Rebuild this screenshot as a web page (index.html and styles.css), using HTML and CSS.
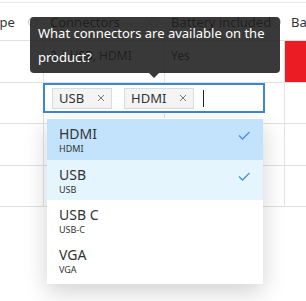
FILE: index.html
```html
<!DOCTYPE html>
<html>
  <head>
    <link rel="stylesheet" href="styles.css">
  </head>

  <body>
    <div class="grid">
      <div class="row head">
        <div class="cell"><span>Type</span><span class="col-menu"></span></div>
        <div class="cell"><span>Connectors</span><span class="col-menu"></span></div>
        <div class="cell"><span>Battery included</span><span class="col-menu"></span></div>
        <div class="cell"><span>Battery type</span></div>
      </div>
      <div class="row">
        <div class="cell"></div>
        <div class="cell">2 <span class="sep">|</span> USB, HDMI</div>
        <div class="cell">Yes</div>
        <div class="cell red"></div>
      </div>
      <div class="row">
        <div class="cell"></div>
        <div class="cell"></div>
        <div class="cell"></div>
        <div class="cell"></div>
      </div>
      <div class="row">
        <div class="cell"></div>
        <div class="cell"></div>
        <div class="cell"></div>
        <div class="cell"></div>
      </div>
      <div class="row">
        <div class="cell"></div>
        <div class="cell"></div>
        <div class="cell"></div>
        <div class="cell"></div>
      </div>
    </div>

    <div class="tooltip">What connectors are available on the product?</div>

    <div class="editor">
      <span class="chip">USB
        <svg class="chip-x" viewBox="0 0 8 8"><path d="M1 1l6 6M7 1l-6 6" /></svg>
      </span>
      <span class="chip">HDMI
        <svg class="chip-x" viewBox="0 0 8 8"><path d="M1 1l6 6M7 1l-6 6" /></svg>
      </span>
      <span class="caret"></span>
    </div>

    <div class="dropdown">
      <div class="option selected">
        <div>
          <div class="option-label">HDMI</div>
          <div class="option-value">HDMI</div>
        </div>
        <svg class="check" viewBox="0 0 12 9"><path d="M1 4.5l3.5 3.5 7-7" /></svg>
      </div>
      <div class="option checked">
        <div>
          <div class="option-label">USB</div>
          <div class="option-value">USB</div>
        </div>
        <svg class="check" viewBox="0 0 12 9"><path d="M1 4.5l3.5 3.5 7-7" /></svg>
      </div>
      <div class="option">
        <div>
          <div class="option-label">USB C</div>
          <div class="option-value">USB-C</div>
        </div>
      </div>
      <div class="option">
        <div>
          <div class="option-label">VGA</div>
          <div class="option-value">VGA</div>
        </div>
      </div>
    </div>
  </body>
</html>
```

FILE: styles.css
```css
* {
  box-sizing: border-box;
}

body {
  margin: 0;
  width: 306px;
  height: 301px;
  overflow: hidden;
  position: relative;
  background-color: #fff;
  color: #333;
  font-family: "Noto Sans", "Open Sans", sans-serif;
}

/* Grid behind the editor */

.grid {
  margin: 2px 0 0 -20px;
  width: 420px;
  border-top: 1px solid #e8e8e8;
}

.row {
  display: grid;
  grid-template-columns: 64px 121px 120px 115px;
  height: 41.5px;
  border-bottom: 1px solid #e0e0e0;
}

.row.head {
  height: 38px;
}

.cell {
  padding: 6px 6px;
  font-size: 12px;
  border-right: 1px solid #e3e3e3;
  white-space: nowrap;
  overflow: hidden;
}

.cell.red {
  background-color: #ec1c24;
}

.sep {
  color: #999;
}

.head .cell {
  display: flex;
  align-items: center;
  justify-content: space-between;
  padding: 0 6px 0 6px;
  font-size: 13px;
  border-right: none;
}

.col-menu {
  width: 10px;
  height: 10px;
  border-radius: 50%;
  border: 1.5px solid #c4c4c4;
  flex-shrink: 0;
}

/* Tooltip */

.tooltip {
  position: absolute;
  left: 30px;
  top: 17px;
  width: 250px;
  height: 56px;
  padding: 4px 8px;
  border-radius: 4px;
  background-color: rgba(30, 30, 30, 0.88);
  color: #fff;
  font-size: 13px;
  line-height: 24px;
}

.tooltip::after {
  content: "";
  position: absolute;
  left: 119px;
  bottom: -5px;
  border-left: 5px solid transparent;
  border-right: 5px solid transparent;
  border-top: 5px solid rgba(30, 30, 30, 0.88);
}

/* Editor */

.editor {
  position: absolute;
  left: 43px;
  top: 83px;
  width: 222px;
  height: 30px;
  display: flex;
  align-items: center;
  gap: 12px;
  padding-left: 7px;
  border: 2px solid #3c88cf;
  background-color: #fff;
}

.chip {
  display: flex;
  align-items: center;
  gap: 13px;
  height: 21px;
  padding: 0 6px;
  border: 1px solid #dcdcdc;
  background-color: #f4f4f4;
  font-size: 13px;
  color: #333;
}

.chip-x {
  width: 8px;
  height: 8px;
  fill: none;
  stroke: #7a7a7a;
  stroke-width: 1;
}

.caret {
  width: 1px;
  height: 17px;
  margin-left: -3px;
  background-color: #222;
}

/* Dropdown */

.dropdown {
  position: absolute;
  left: 47px;
  top: 118px;
  width: 216px;
  height: 166px;
  padding-top: 1px;
  background-color: #fff;
  box-shadow: 0 8px 22px rgba(0, 0, 0, 0.18);
}

.option {
  display: flex;
  justify-content: space-between;
  height: 40px;
  padding: 6px 13px 0 12px;
}

.option.selected {
  height: 41px;
  background-color: #c2e3fb;
}

.option.checked {
  background-color: #e5f5fe;
}

.option-label {
  font-size: 14px;
  line-height: 18px;
  color: #333;
}

.option-value {
  font-size: 9px;
  line-height: 11px;
  color: #333;
}

.check {
  width: 12px;
  height: 9px;
  margin-top: 6px;
  fill: none;
  stroke: #4a90d9;
  stroke-width: 1.3;
}
```
